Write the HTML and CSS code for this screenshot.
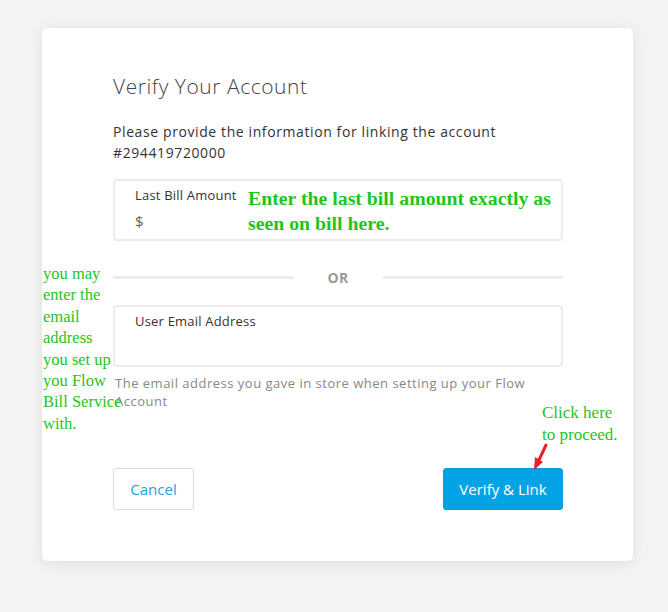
FILE: index.html
```html
<!DOCTYPE html>
<html>
<head>
<meta charset="utf-8">
<link rel="stylesheet" href="styles.css">
</head>
<body>
<div class="card">
  <h1 class="title">Verify Your Account</h1>
  <p class="intro">Please provide the information for linking the account #294419720000</p>
  <div class="field">
    <div class="label">Last Bill Amount</div>
    <div class="value">$</div>
  </div>
  <div class="divider"><span class="line"></span><span class="or">OR</span><span class="line"></span></div>
  <div class="field">
    <div class="label">User Email Address</div>
  </div>
  <p class="help">The email address you gave in store when setting up your Flow Account</p>
  <div class="actions">
    <button class="btn cancel">Cancel</button>
    <button class="btn primary">Verify &amp; Link</button>
  </div>
</div>
<div class="note note-amount">Enter the last bill amount exactly as<br>seen on bill here.</div>
<div class="note note-email">you may<br>enter the<br>email<br>address<br>you set up<br>you Flow<br>Bill Service<br>with.</div>
<div class="note note-click">Click here<br>to proceed.</div>
<svg class="arrow" width="30" height="40" viewBox="0 0 30 40">
  <path d="M19 2 L12 17" stroke="#e8202a" stroke-width="3" stroke-linecap="round"/>
  <path d="M8 14 L16 19 L7 27 Z" fill="#e8202a"/>
</svg>
</body>
</html>
```
FILE: styles.css
```css
html, body {
  margin: 0;
  padding: 0;
}
body {
  background: #f3f3f3;
  position: relative;
  width: 668px;
  height: 612px;
  padding: 28px 0 0 42px;
  box-sizing: border-box;
  font-family: "Open Sans", "Liberation Sans", sans-serif;
  color: #333;
}
.card {
  width: 591px;
  box-sizing: border-box;
  background: #fff;
  border-radius: 5px;
  box-shadow: 0 2px 14px rgba(0, 0, 0, 0.09);
  padding: 44px 70px 51px 71px;
}
.title {
  margin: 0;
  font-size: 21px;
  font-weight: 300;
  line-height: 28px;
  letter-spacing: 0.55px;
  color: #444;
}
.intro {
  margin: 21px 0 0;
  font-size: 14px;
  line-height: 21px;
  letter-spacing: 0.6px;
  color: #333;
}
.field {
  margin-top: 16px;
  height: 62px;
  box-sizing: border-box;
  border: 2px solid #ececec;
  border-radius: 4px;
  padding: 5px 20px 0;
}
.label {
  font-size: 13px;
  line-height: 18px;
  letter-spacing: 0.2px;
  color: #333;
}
.value {
  margin-top: 8px;
  font-size: 15px;
  line-height: 18px;
  color: #666;
}
.divider {
  display: flex;
  align-items: center;
  height: 36px;
  margin-top: 18px;
  margin-bottom: 10px;
}
.line {
  flex: 1;
  height: 3px;
  background: #ececec;
}
.or {
  padding: 0 34px;
  font-size: 14px;
  font-weight: 700;
  letter-spacing: 0.3px;
  color: #999;
}
.divider + .field {
  margin-top: 0;
}
.help {
  margin: 7px 0 0 2px;
  font-size: 13px;
  line-height: 18px;
  letter-spacing: 0.5px;
  color: #888;
}
.actions {
  display: flex;
  justify-content: space-between;
  margin-top: 58px;
}
.btn {
  height: 42px;
  font-family: inherit;
  font-size: 15px;
  letter-spacing: 0;
  border-radius: 3px;
  padding: 0;
}
.cancel {
  width: 81px;
  background: #fff;
  border: 1px solid #dcdcdc;
  color: #20a4e4;
}
.primary {
  width: 120px;
  background: #04a3e6;
  border: 1px solid #0b9ad6;
  color: #fff;
}
.note {
  position: absolute;
  font-family: "Liberation Serif", "Times New Roman", serif;
  color: #1ec51e;
}
.note-amount {
  left: 248px;
  top: 186px;
  font-size: 19.8px;
  font-weight: 700;
  line-height: 25px;
}
.note-email {
  left: 43px;
  top: 263px;
  font-size: 16.5px;
  line-height: 21.4px;
}
.note-click {
  left: 542px;
  top: 402px;
  font-size: 17px;
  line-height: 21.5px;
}
.arrow {
  position: absolute;
  left: 527px;
  top: 443px;
}
```
